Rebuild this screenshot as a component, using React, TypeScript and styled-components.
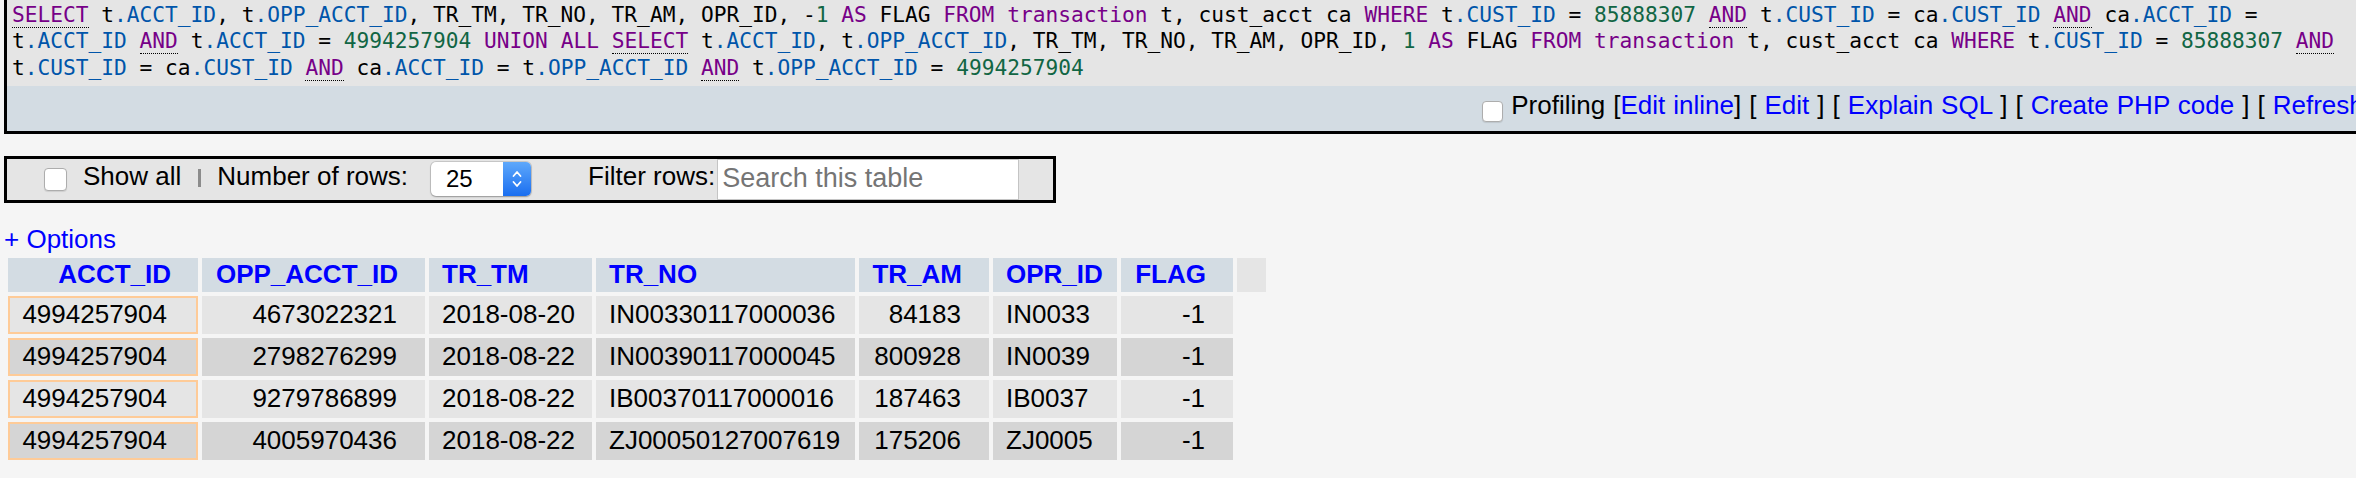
import React from 'react';
import styled, { createGlobalStyle, css } from 'styled-components';

const GlobalStyle = createGlobalStyle`
  html, body {
    margin: 0;
    padding: 0;
    overflow: hidden;
    background: #f5f5f5;
  }
  *, *::before, *::after {
    box-sizing: border-box;
  }
  body {
    font-family: "Liberation Sans", Arial, Helvetica, sans-serif;
    font-size: 26px;
    color: #000;
  }
`;

const SQL_LINES = [
  'SELECT t.ACCT_ID, t.OPP_ACCT_ID, TR_TM, TR_NO, TR_AM, OPR_ID, -1 AS FLAG FROM transaction t, cust_acct ca WHERE t.CUST_ID = 85888307 AND t.CUST_ID = ca.CUST_ID AND ca.ACCT_ID =',
  't.ACCT_ID AND t.ACCT_ID = 4994257904 UNION ALL SELECT t.ACCT_ID, t.OPP_ACCT_ID, TR_TM, TR_NO, TR_AM, OPR_ID, 1 AS FLAG FROM transaction t, cust_acct ca WHERE t.CUST_ID = 85888307 AND',
  't.CUST_ID = ca.CUST_ID AND ca.ACCT_ID = t.OPP_ACCT_ID AND t.OPP_ACCT_ID = 4994257904',
];

const KEYWORDS = new Set(['SELECT', 'AS', 'FROM', 'WHERE', 'AND', 'UNION', 'ALL', 'transaction']);
const DOC_LINKS = new Set(['SELECT', 'AND']);

type TokenKind = 'plain' | 'keyword' | 'prop' | 'number';
type Align = 'left' | 'right';

const tokenize = (line: string) => {
  const re = /\.[A-Za-z_]+|[A-Za-z_]+|\d+|[^A-Za-z_\d.]+|\./g;
  const out: { text: string; kind: TokenKind; doc: boolean }[] = [];
  let m: RegExpExecArray | null;
  while ((m = re.exec(line))) {
    const text = m[0];
    let kind: TokenKind = 'plain';
    if (text.startsWith('.') && text.length > 1) kind = 'prop';
    else if (/^\d+$/.test(text)) kind = 'number';
    else if (KEYWORDS.has(text)) kind = 'keyword';
    out.push({ text, kind, doc: DOC_LINKS.has(text) });
  }
  return out;
};

const tokenColor = (kind: TokenKind) => {
  switch (kind) {
    case 'keyword':
      return '#770088';
    case 'prop':
      return '#0055aa';
    case 'number':
      return '#116644';
    default:
      return '#000';
  }
};

const Page = styled.div`
  padding-left: 4px;
`;

const SqlBox = styled.div`
  width: 2384px;
  border: 3px solid #000;
  border-top: none;
  background: #e5e5e5;
`;

const Code = styled.div`
  padding: 2px 0 5px 5px;
  font-family: "DejaVu Sans Mono", "Liberation Mono", monospace;
  font-size: 21.2px;
  line-height: 26.3px;
  white-space: pre;
`;

const Token = styled.span<{ $kind: TokenKind; $doc: boolean }>`
  color: ${p => tokenColor(p.$kind)};
  ${p =>
    p.$doc &&
    css`
      border-bottom: 1px dotted #000;
    `}
`;

const ToolsBar = styled.div`
  height: 45px;
  background: #d3dce3;
  display: flex;
  justify-content: flex-end;
  align-items: center;
  padding: 0 6px 5px 0;
  white-space: nowrap;
`;

const Check = styled.input.attrs({ type: 'checkbox' })<{ $size: number }>`
  appearance: none;
  flex: none;
  margin: 0;
  width: ${p => p.$size}px;
  height: ${p => p.$size}px;
  border: 1px solid #adadad;
  border-radius: 4px;
  background: #fff;
  box-shadow: 0 1px 1px rgba(0, 0, 0, 0.1);
`;

const BarCheck = styled(Check)`
  margin: 11px 8px 0 0;
`;

const BarText = styled.span`
  color: #000;
  word-spacing: 0.8px;
`;

const Link = styled.a`
  color: #0000ff;
  text-decoration: none;
`;

const NavBar = styled.div`
  margin-top: 22px;
  width: 1052px;
  height: 47px;
  border: 3px solid #000;
  background: #e5e5e5;
  display: flex;
  align-items: center;
  white-space: nowrap;
`;

const NavCheck = styled(Check)`
  margin-left: 37px;
`;

const Label = styled.span<{ $gap: number }>`
  margin-left: ${p => p.$gap}px;
  padding-bottom: 5px;
`;

const Separator = styled.span`
  display: block;
  margin-left: 17px;
  width: 3px;
  height: 18px;
  margin-bottom: 2px;
  background: #8c8c8c;
`;

const SelectBox = styled.div`
  margin-left: 23px;
  width: 100px;
  height: 34px;
  display: flex;
  border-radius: 5px;
  background: #fff;
  overflow: hidden;
  box-shadow: 0 0 0 1px rgba(0, 0, 0, 0.12), 0 1px 2px rgba(0, 0, 0, 0.25);
`;

const SelectValue = styled.span`
  flex: 1;
  padding-left: 15px;
  font-size: 24px;
  line-height: 34px;
`;

const Stepper = styled.span`
  width: 28px;
  display: flex;
  align-items: center;
  justify-content: center;
  background: linear-gradient(#5ea8fb, #1a6ef0);
`;

const SearchInput = styled.input`
  margin-left: 2px;
  width: 302px;
  height: 41px;
  border: 1px solid #c4c4c4;
  background: #fff;
  padding: 0 0 2px 4px;
  font-family: "Liberation Sans", Arial, sans-serif;
  font-size: 27px;
  outline: none;

  &::placeholder {
    color: #757575;
  }
`;

const OptionsLink = styled.a`
  display: block;
  margin-top: 21px;
  line-height: 30px;
  color: #0000ff;
  text-decoration: none;
`;

const Grid = styled.table`
  border-spacing: 4px;
  white-space: nowrap;
`;

const HeadCell = styled.th<{ $w: number; $align: Align }>`
  width: ${p => p.$w}px;
  height: 34px;
  padding: ${p => (p.$align === 'right' ? '0 27px 0 12px' : '0 8px 0 13px')};
  background: #d3dce3;
  color: #0000ff;
  font-weight: bold;
  text-align: ${p => p.$align};
`;

const FillerCell = styled.th`
  width: 29px;
  padding: 0;
  background: #e5e5e5;
`;

const DataCell = styled.td<{ $align: Align; $even: boolean; $cond?: boolean }>`
  height: 38px;
  padding: ${p => (p.$align === 'right' ? '0 28px 0 12px' : '0 8px 0 13px')};
  background: ${p => (p.$even ? '#d5d5d5' : '#e5e5e5')};
  text-align: ${p => p.$align};
  ${p =>
    p.$cond &&
    css`
      border: 2px solid #fecb98;
      padding-right: 29px;
    `}
`;

const COLUMNS: { name: string; width: number; align: Align }[] = [
  { name: 'ACCT_ID', width: 190, align: 'right' },
  { name: 'OPP_ACCT_ID', width: 223, align: 'right' },
  { name: 'TR_TM', width: 163, align: 'left' },
  { name: 'TR_NO', width: 259, align: 'left' },
  { name: 'TR_AM', width: 130, align: 'right' },
  { name: 'OPR_ID', width: 124, align: 'left' },
  { name: 'FLAG', width: 112, align: 'right' },
];

const ROWS = [
  ['4994257904', '4673022321', '2018-08-20', 'IN00330117000036', '84183', 'IN0033', '-1'],
  ['4994257904', '2798276299', '2018-08-22', 'IN00390117000045', '800928', 'IN0039', '-1'],
  ['4994257904', '9279786899', '2018-08-22', 'IB00370117000016', '187463', 'IB0037', '-1'],
  ['4994257904', '4005970436', '2018-08-22', 'ZJ00050127007619', '175206', 'ZJ0005', '-1'],
];

const StepperIcon = () => (
  <svg width="14" height="24" viewBox="0 0 14 24" fill="none" stroke="#fff" strokeWidth="1.8" strokeLinecap="round" strokeLinejoin="round">
    <path d="M3.5 9 L7 5 L10.5 9" />
    <path d="M3.5 15 L7 19 L10.5 15" />
  </svg>
);

const App: React.FC = () => {
  return (
    <Page>
      <GlobalStyle />
      <SqlBox>
        <Code>
          {SQL_LINES.map((line, i) => (
            <div key={i}>
              {tokenize(line).map((t, j) => (
                <Token key={j} $kind={t.kind} $doc={t.doc}>
                  {t.text}
                </Token>
              ))}
            </div>
          ))}
        </Code>
        <ToolsBar>
          <BarCheck $size={21} />
          <BarText>
            Profiling [<Link href="#">Edit inline</Link>] [ <Link href="#">Edit</Link> ] [{' '}
            <Link href="#">Explain SQL</Link> ] [ <Link href="#">Create PHP code</Link> ] [{' '}
            <Link href="#">Refresh</Link> ]
          </BarText>
        </ToolsBar>
      </SqlBox>

      <NavBar>
        <NavCheck $size={23} />
        <Label $gap={16}>Show all</Label>
        <Separator />
        <Label $gap={16}>Number of rows:</Label>
        <SelectBox>
          <SelectValue>25</SelectValue>
          <Stepper>
            <StepperIcon />
          </Stepper>
        </SelectBox>
        <Label $gap={57}>Filter rows:</Label>
        <SearchInput placeholder="Search this table" />
      </NavBar>

      <OptionsLink href="#">+ Options</OptionsLink>

      <Grid>
        <thead>
          <tr>
            {COLUMNS.map(col => (
              <HeadCell key={col.name} $w={col.width} $align={col.align}>
                {col.name}
              </HeadCell>
            ))}
            <FillerCell />
          </tr>
        </thead>
        <tbody>
          {ROWS.map((row, r) => (
            <tr key={r}>
              {row.map((value, c) => (
                <DataCell key={c} $align={COLUMNS[c].align} $even={r % 2 === 1} $cond={c === 0}>
                  {value}
                </DataCell>
              ))}
            </tr>
          ))}
        </tbody>
      </Grid>
    </Page>
  );
};

export default App;
